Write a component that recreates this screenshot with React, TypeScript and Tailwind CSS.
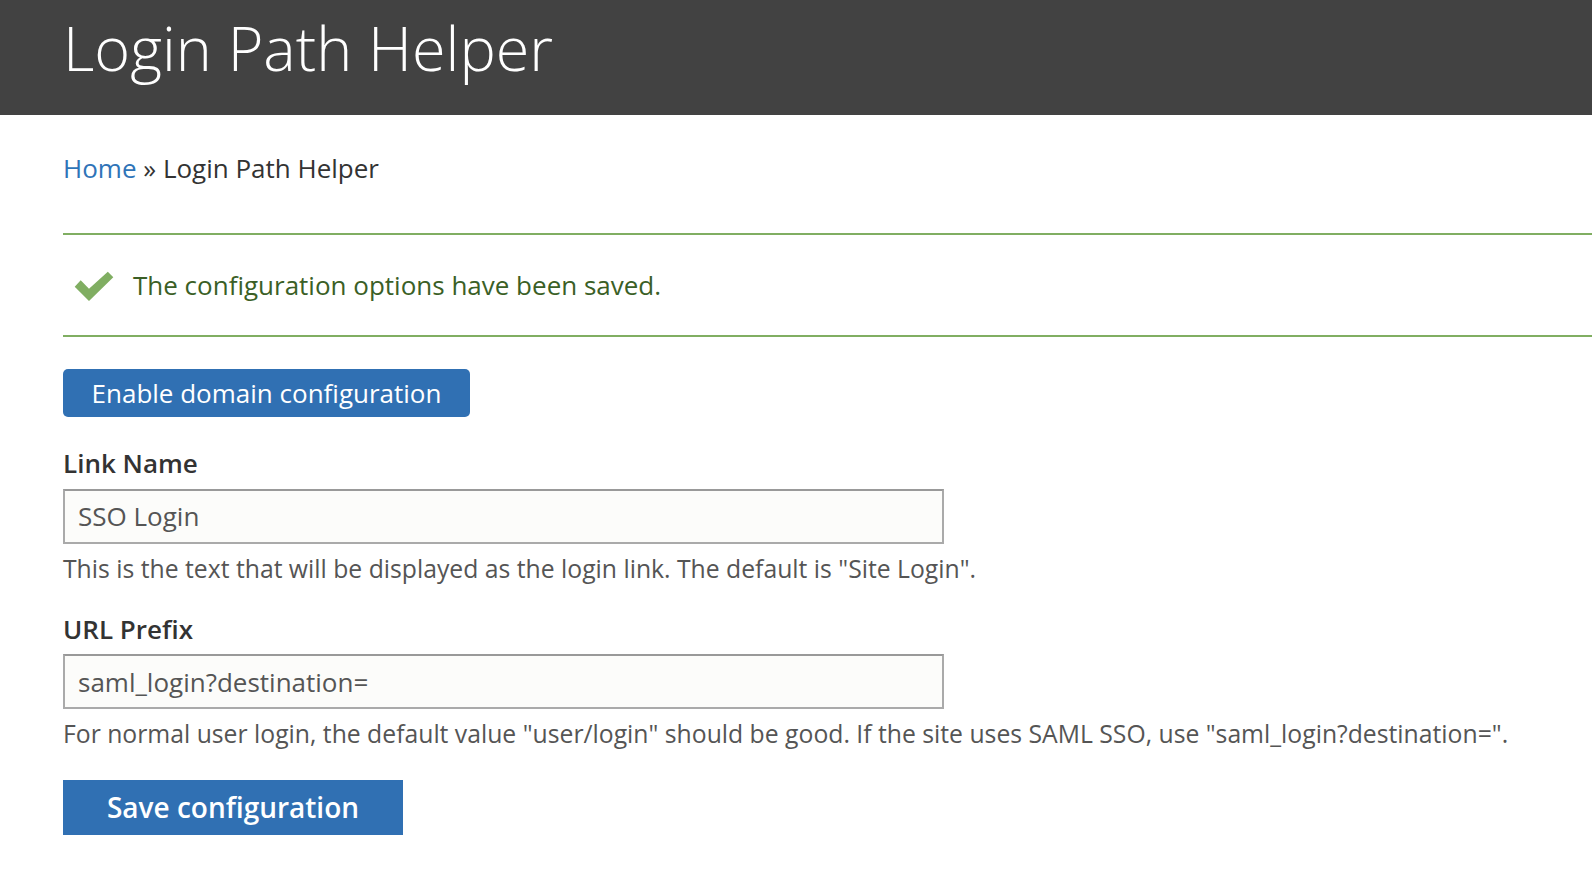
export default function App() {
  return (
    <div className="min-h-[872px] bg-white font-['Open_Sans',sans-serif] text-[#333]">
      <header className="h-[115px] bg-[#424242] pl-[63px]">
        <h1 className="text-[61.1px] leading-[96px] font-light text-white">Login Path Helper</h1>
      </header>
      <main className="pl-[63px]">
        <nav className="pt-[37px] text-[26px] leading-[32px] text-[#333]">
          <a className="text-[#2f74b8]">Home</a> » Login Path Helper
        </nav>
        <div className="mt-[49px] flex h-[104px] items-center border-y-2 border-[#80ae62] pl-[11px] text-[26px] text-[#3b5f26]">
          <svg width="40" height="32" viewBox="0 0 40 32" className="mr-[19px]"><polygon points="0.7,17.7 6.7,11.2 15,19.8 33.8,2.7 39.3,8.3 15,32" fill="#80ae62" /></svg>
          The configuration options have been saved.
        </div>
        <button className="mt-[32px] block h-[48px] w-[407px] rounded-[5px] bg-[#3070b3] text-[26px] text-white">Enable domain configuration</button>
        <label className="mt-[30px] block text-[26px] leading-[32px] font-semibold text-[#333]">Link Name</label>
        <input readOnly value="SSO Login" className="mt-[10px] block h-[55px] w-[881px] border-2 border-[#aaaaaa] border-t-[#999999] bg-[#fcfcfa] px-[13px] pb-[1px] text-[26px] text-[#555]" />
        <p className="mt-[9px] text-[24.74px] leading-[32px] text-[#555]">This is the text that will be displayed as the login link. The default is "Site Login".</p>
        <label className="mt-[28px] block text-[26px] leading-[32px] font-semibold text-[#333]">URL Prefix</label>
        <input readOnly value="saml_login?destination=" className="mt-[9px] block h-[55px] w-[881px] border-2 border-[#aaaaaa] border-t-[#999999] bg-[#fcfcfa] px-[13px] text-[26px] text-[#555]" />
        <p className="mt-[9px] text-[24.74px] leading-[32px] text-[#555]">For normal user login, the default value "user/login" should be good. If the site uses SAML SSO, use "saml_login?destination=".</p>
        <button className="mt-[30px] block h-[55px] w-[340px] bg-[#3070b3] pb-[1px] text-[28px] font-semibold text-white">Save configuration</button>
      </main>
    </div>
  );
}
